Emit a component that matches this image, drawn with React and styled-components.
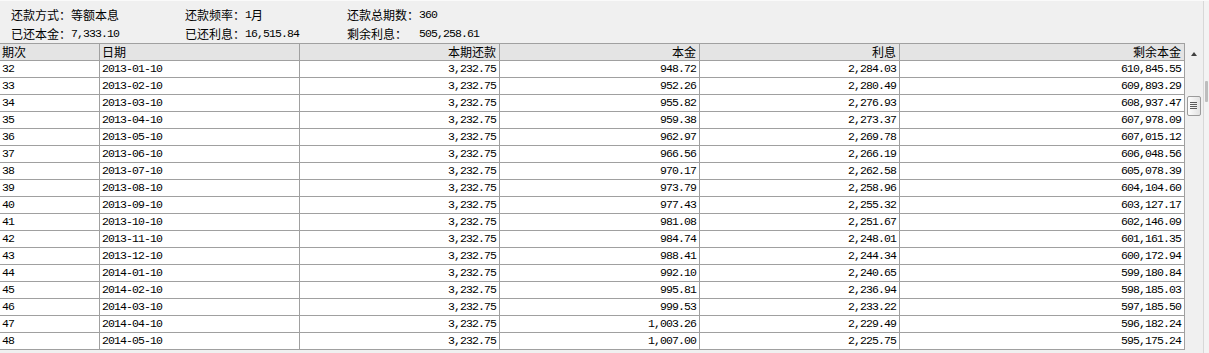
import React from 'react';
import styled, { createGlobalStyle } from 'styled-components';

const GlobalStyle = createGlobalStyle`
  html, body {
    margin: 0;
    padding: 0;
    background: #f0f0f0;
    overflow: hidden;
  }
  body {
    font-family: "Noto Sans CJK SC", "Liberation Sans", sans-serif;
    font-size: 12px;
    color: #000;
  }
`;

const rows = [
  ['32', '2013-01-10', '3,232.75', '948.72', '2,284.03', '610,845.55'],
  ['33', '2013-02-10', '3,232.75', '952.26', '2,280.49', '609,893.29'],
  ['34', '2013-03-10', '3,232.75', '955.82', '2,276.93', '608,937.47'],
  ['35', '2013-04-10', '3,232.75', '959.38', '2,273.37', '607,978.09'],
  ['36', '2013-05-10', '3,232.75', '962.97', '2,269.78', '607,015.12'],
  ['37', '2013-06-10', '3,232.75', '966.56', '2,266.19', '606,048.56'],
  ['38', '2013-07-10', '3,232.75', '970.17', '2,262.58', '605,078.39'],
  ['39', '2013-08-10', '3,232.75', '973.79', '2,258.96', '604,104.60'],
  ['40', '2013-09-10', '3,232.75', '977.43', '2,255.32', '603,127.17'],
  ['41', '2013-10-10', '3,232.75', '981.08', '2,251.67', '602,146.09'],
  ['42', '2013-11-10', '3,232.75', '984.74', '2,248.01', '601,161.35'],
  ['43', '2013-12-10', '3,232.75', '988.41', '2,244.34', '600,172.94'],
  ['44', '2014-01-10', '3,232.75', '992.10', '2,240.65', '599,180.84'],
  ['45', '2014-02-10', '3,232.75', '995.81', '2,236.94', '598,185.03'],
  ['46', '2014-03-10', '3,232.75', '999.53', '2,233.22', '597,185.50'],
  ['47', '2014-04-10', '3,232.75', '1,003.26', '2,229.49', '596,182.24'],
  ['48', '2014-05-10', '3,232.75', '1,007.00', '2,225.75', '595,175.24'],
];

const columns = [
  { title: '期次', align: 'left' },
  { title: '日期', align: 'left' },
  { title: '本期还款', align: 'right' },
  { title: '本金', align: 'right' },
  { title: '利息', align: 'right' },
  { title: '剩余本金', align: 'right' },
];

const Page = styled.div`
  display: flex;
  width: 1209px;
  height: 353px;
  background: #f0f0f0;
  border-top: 1px solid #fafafa;
  box-sizing: border-box;
`;

const Content = styled.div`
  flex: 1;
  display: flex;
  flex-direction: column;
`;

const Summary = styled.div`
  height: 42px;
  box-sizing: border-box;
  padding: 4px 0 0 11px;
  display: grid;
  grid-template-columns: 174px 162px 1fr;
  grid-auto-rows: 19px;
  align-items: center;
`;

const Field = styled.div`
  display: flex;
  align-items: center;
  white-space: nowrap;
`;

const Label = styled.span`
  width: ${(p) => p.$w || 60}px;
  flex: none;
`;

const Num = styled.span`
  font-family: "Liberation Mono", "DejaVu Sans Mono", monospace;
  font-size: 11.5px;
  letter-spacing: -0.9px;
`;

const TableArea = styled.div`
  flex: 1;
  display: flex;
`;

const Grid = styled.div`
  display: grid;
  grid-template-columns: 100px 200px 200px 200px 200px 285px;
  grid-auto-rows: 17px;
  align-content: start;
  border-top: 1px solid #a0a0a0;
`;

const HeadCell = styled.div`
  background: #e4e4e4;
  border-right: 1px solid #a0a0a0;
  border-bottom: 1px solid #a0a0a0;
  line-height: 16px;
  padding: 0 ${(p) => (p.$align === 'right' ? 3 : 2)}px;
  text-align: ${(p) => p.$align};
  white-space: nowrap;
  overflow: hidden;
`;

const Cell = styled.div`
  background: #fff;
  border-right: 1px solid #a0a0a0;
  border-bottom: 1px solid #a0a0a0;
  line-height: 16px;
  padding: 0 ${(p) => (p.$align === 'right' ? 3 : 2)}px;
  text-align: ${(p) => p.$align};
  white-space: nowrap;
  overflow: hidden;
  font-family: "Liberation Mono", "DejaVu Sans Mono", monospace;
  font-size: 11.5px;
  letter-spacing: -0.9px;
`;

const VScroll = styled.div`
  width: 18px;
  display: flex;
  flex-direction: column;
  align-items: center;
  padding-top: 9px;
  box-sizing: border-box;
`;

const UpArrow = styled.div`
  width: 0;
  height: 0;
  border-left: 3px solid transparent;
  border-right: 3px solid transparent;
  border-bottom: 4px solid #404040;
`;

const Thumb = styled.div`
  margin-top: 40px;
  margin-right: 1px;
  width: 14px;
  height: 20px;
  box-sizing: border-box;
  border: 1px solid #9b9b9b;
  border-radius: 2px;
  background: linear-gradient(to right, #fdfdfd, #e2e2e2);
  display: flex;
  align-items: center;
  justify-content: center;
`;

const OuterStrip = styled.div`
  width: 6px;
  border-left: 1px solid #d8d8d8;
  background: #f3f3f3;
  box-sizing: border-box;
  padding-top: 80px;
`;

const OuterThumb = styled.div`
  width: 3px;
  height: 21px;
  margin-left: 1px;
  border-radius: 1px;
  background: #bdbdbd;
`;

const Grip = () => (
  <svg width="7" height="8" viewBox="0 0 7 8">
    <g stroke="#5a5a5a" strokeWidth="1">
      <line x1="0" y1="0.5" x2="7" y2="0.5" />
      <line x1="0" y1="2.5" x2="7" y2="2.5" />
      <line x1="0" y1="4.5" x2="7" y2="4.5" />
      <line x1="0" y1="6.5" x2="7" y2="6.5" />
    </g>
  </svg>
);

export default function App() {
  return (
    <>
      <GlobalStyle />
      <Page>
        <Content>
          <Summary>
            <Field>
              <Label>还款方式：</Label>等额本息
            </Field>
            <Field>
              <Label>还款频率：</Label>
              <Num>1</Num>月
            </Field>
            <Field>
              <Label $w={72}>还款总期数：</Label>
              <Num>360</Num>
            </Field>
            <Field>
              <Label>已还本金：</Label>
              <Num>7,333.10</Num>
            </Field>
            <Field>
              <Label>已还利息：</Label>
              <Num>16,515.84</Num>
            </Field>
            <Field>
              <Label $w={72}>剩余利息：</Label>
              <Num>505,258.61</Num>
            </Field>
          </Summary>
          <TableArea>
            <Grid>
              {columns.map((c) => (
                <HeadCell key={c.title} $align={c.align}>
                  {c.title}
                </HeadCell>
              ))}
              {rows.map((r) =>
                r.map((v, i) => (
                  <Cell key={r[0] + '-' + i} $align={columns[i].align}>
                    {v}
                  </Cell>
                ))
              )}
            </Grid>
            <VScroll>
              <UpArrow />
              <Thumb>
                <Grip />
              </Thumb>
            </VScroll>
          </TableArea>
        </Content>
        <OuterStrip>
          <OuterThumb />
        </OuterStrip>
      </Page>
    </>
  );
}
